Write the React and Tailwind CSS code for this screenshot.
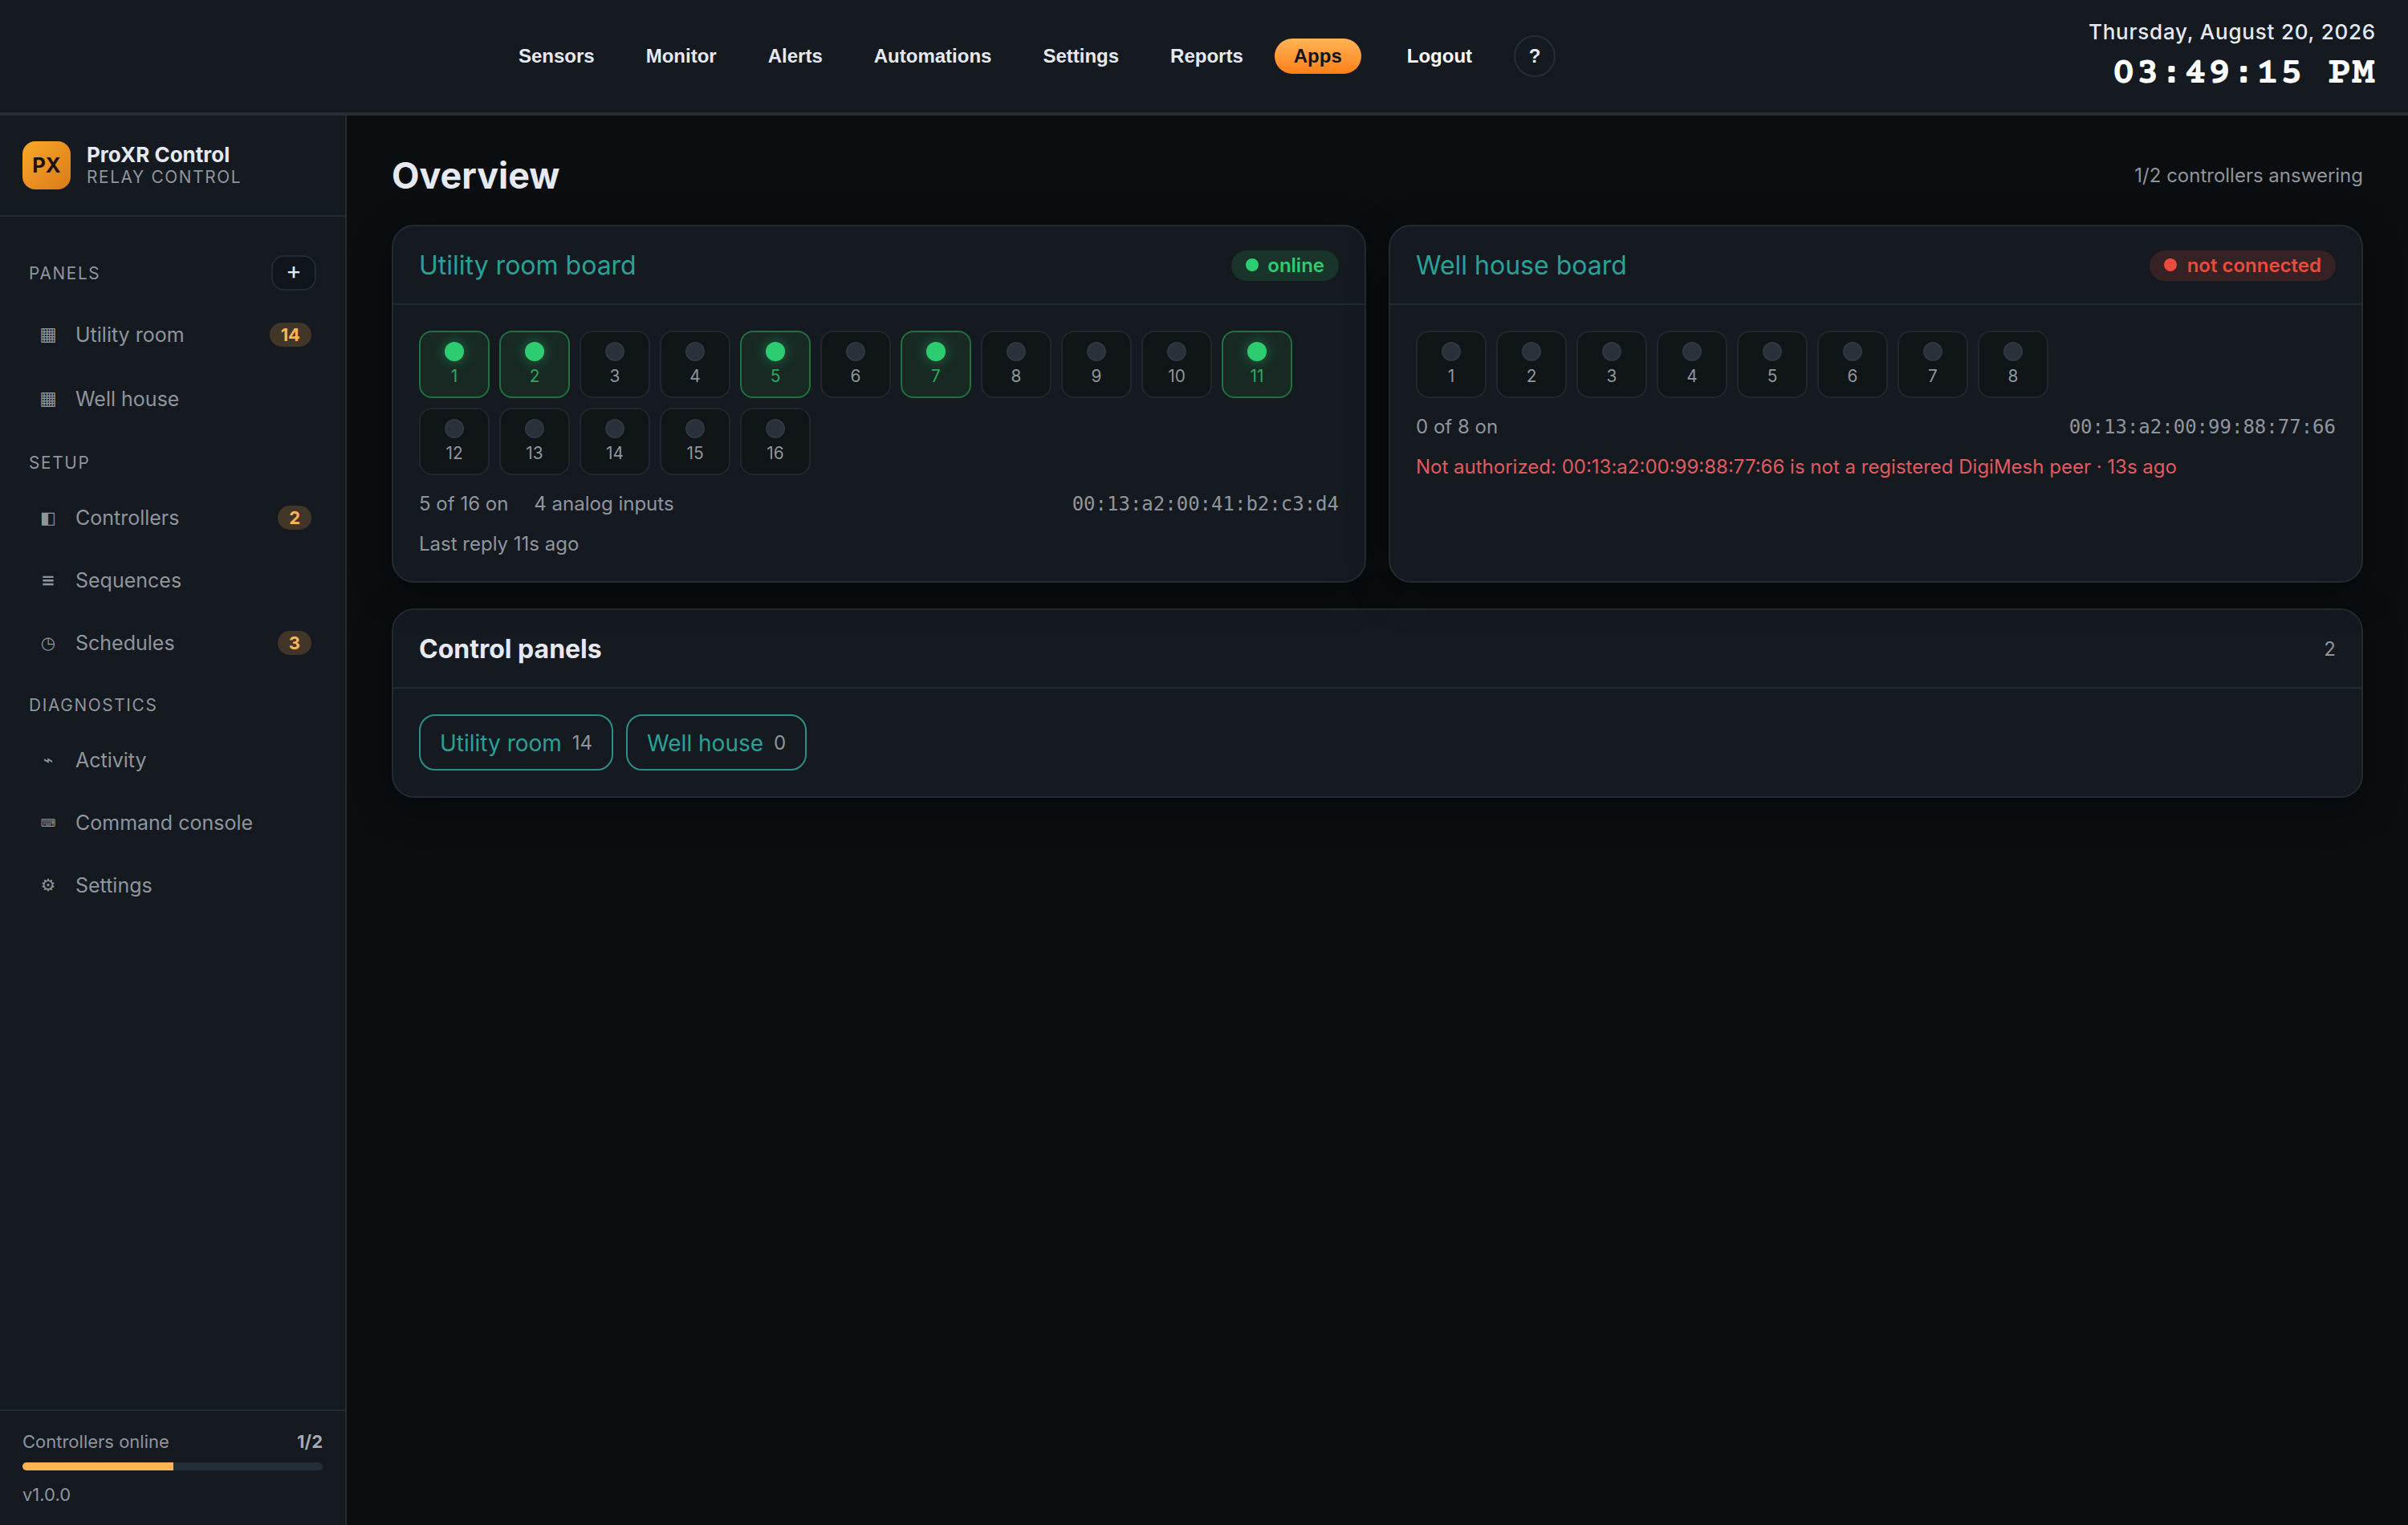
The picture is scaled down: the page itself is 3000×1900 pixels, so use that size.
import React from "react";

const NAV_LINKS = ["Sensors", "Monitor", "Alerts", "Automations", "Settings", "Reports"];

const PANELS = [
  { name: "Utility room", count: 14 },
  { name: "Well house", count: 0 },
];

const SETUP = [
  { icon: "◧", name: "Controllers", count: 2 },
  { icon: "≡", name: "Sequences" },
  { icon: "◷", name: "Schedules", count: 3 },
];

const DIAGNOSTICS = [
  { icon: "⌁", name: "Activity" },
  { icon: "⌨", name: "Command console", small: true },
  { icon: "⚙", name: "Settings" },
];

function Header() {
  return (
    <header className="flex h-36 shrink-0 items-start justify-between border-b-4 border-[#252e37] bg-[#151a21] pr-10 pl-[622px]">
      <nav className="flex h-[140px] items-center font-['Liberation_Sans',sans-serif] text-[24px] font-bold text-[#e6e9f2]">
        <div className="flex gap-4">
          {NAV_LINKS.map((link) => (
            <a key={link} className="flex h-11 items-center px-6">{link}</a>
          ))}
          <a className="-ml-px flex h-11 items-center rounded-full bg-linear-to-b from-[#ffb454] to-[#ff7f11] px-6 text-[#111418]">Apps</a>
        </div>
        <button className="ml-[33px] flex h-11 items-center px-6 text-white">Logout</button>
        <button className="ml-7 flex size-[52px] items-center justify-center rounded-full border-2 border-[#252e37]">?</button>
      </nav>
      <div className="flex flex-col items-end pt-6">
        <div className="text-[26px] leading-8 font-medium tracking-[0.78px] text-[#e6e9f2]">Thursday, August 20, 2026</div>
        <div className="mt-[11px] font-['Courier_Prime','Courier_10_Pitch','Nimbus_Mono_PS','FreeMono','Liberation_Mono',monospace] text-[48px] leading-[50px] font-bold tracking-[1.1px] whitespace-pre text-white">03:49:15 PM</div>
      </div>
    </header>
  );
}

function Badge({ children }) {
  return (
    <span className="flex h-[30px] items-center rounded-full bg-[#423628] px-3.5 text-[22px] font-bold text-[#ffb454]">{children}</span>
  );
}

function iconSize(big, small) {
  if (big) return "text-[23px] -mt-0.5";
  return small ? "text-[13px]" : "text-[21px] font-bold";
}

function NavItem({ icon, name, count, big, small }) {
  return (
    <a className={big ? "flex h-20 items-center pr-[42px] pl-11" : "flex h-[78px] items-center pr-[42px] pl-11"}>
      <span className={`flex w-8 justify-center font-['DejaVu_Sans',sans-serif] leading-none ${iconSize(big, small)}`}>{icon}</span>
      <span className="mt-0.5 ml-[18px] flex-1 text-[25px]">{name}</span>
      {count ? <Badge>{count}</Badge> : null}
    </a>
  );
}

function Sidebar() {
  return (
    <aside className="flex w-[432px] shrink-0 flex-col border-r-2 border-[#222b33] bg-[#151a21] text-[#8f959d]">
      {/* Brand */}
      <div className="flex h-[126px] items-center gap-5 border-b-2 border-[#222b33] pl-7">
        <div className="flex size-[60px] items-center justify-center rounded-[16px] bg-linear-135 from-[#f9a826] to-[#d97a1a] text-[25.6px] font-bold text-[#1a1206]">PX</div>
        <div>
          <div className="text-[26px] leading-[30px] font-bold text-[#e6e9f2]">ProXR Control</div>
          <div className="text-[20.8px] leading-[26px] tracking-[1.66px]">RELAY CONTROL</div>
        </div>
      </div>

      {/* Links */}
      <div className="flex-1 pt-12">
        <div className="mb-[15px] flex h-11 items-center justify-between pr-9 pl-9">
          <span className="mt-0.5 text-[20.8px] tracking-[1.66px]">PANELS</span>
          <button className="flex h-11 w-14 items-center justify-center rounded-[16px] border-2 border-[#222b33] bg-[#10141b] pb-1.5 text-[30px] text-[#e6e9f2]">+</button>
        </div>
        {PANELS.map((p) => (
          <NavItem key={p.name} icon="▦" name={p.name} count={p.count} big />
        ))}
        <div className="mt-[27px] mb-4 pl-9 text-[20.8px] leading-[26px] tracking-[1.66px]">SETUP</div>
        {SETUP.map((item) => (
          <NavItem key={item.name} {...item} />
        ))}
        <div className="mt-[26px] mb-4 pl-9 text-[20.8px] leading-[26px] tracking-[1.66px]">DIAGNOSTICS</div>
        {DIAGNOSTICS.map((item) => (
          <NavItem key={item.name} {...item} />
        ))}
      </div>

      {/* Footer */}
      <div className="h-[144px] border-t-2 border-[#222b33] px-7 pt-6 text-[22px]">
        <div className="flex justify-between leading-7">
          <span>Controllers online</span>
          <span className="font-bold text-[#a4a9b1]">1/2</span>
        </div>
        <div className="mt-3 h-2.5 overflow-hidden rounded-full bg-[#252e37]">
          <div className="h-full w-[188px] bg-[#ffb454]" />
        </div>
        <div className="mt-4 leading-7">v1.0.0</div>
      </div>
    </aside>
  );
}

function Relay({ number, on }) {
  return (
    <div className={on ? "flex h-[84px] w-[88px] flex-col items-center rounded-[16px] border-2 border-[#22703f] bg-[#182924] pt-3 text-[#29a95f]" : "flex h-[84px] w-[88px] flex-col items-center rounded-[16px] border-2 border-[#20272f] bg-[#101518] pt-3"}>
      <span className={on ? "size-6 rounded-full bg-[#2ecc71] shadow-[0_0_16px_rgba(46,204,113,0.45)]" : "size-6 rounded-full border-2 border-[#303842] bg-[#2a313b]"} />
      <span className="mt-[7px] text-[20.8px] leading-6">{number}</span>
    </div>
  );
}

function BoardCard({ title, status, online, total, active, inputs, mac, children }) {
  const relays = Array.from({ length: total }, (_, i) => i + 1);
  return (
    <section className="flex-1 rounded-[28px] border-2 border-[#222b33] bg-[#151a21] shadow-[0_12px_48px_rgba(0,0,0,0.35)]">
      <div className="flex h-[98px] items-center justify-between border-b-2 border-[#222b33] px-8">
        <h2 className="mt-0.5 text-[32px] text-[#2aa198]">{title}</h2>
        <span className={online ? "mt-0.5 flex h-[38px] items-center gap-[11px] rounded-full bg-[#19342a] px-[18px] text-[24px] font-semibold text-[#2ecc71]" : "mt-0.5 flex h-[38px] items-center gap-[13px] rounded-full bg-[#362124] px-[18px] text-[24px] font-semibold text-[#e74c3c]"}>
          <span className={online ? "-mt-0.5 size-4 rounded-full bg-[#2ecc71]" : "-mt-0.5 size-4 rounded-full bg-[#e74c3c]"} />
          {status}
        </span>
      </div>
      <div className="p-8 pb-7 text-[24px] text-[#8f959d]">
        <div className="flex flex-wrap gap-3">
          {relays.map((n) => (
            <Relay key={n} number={n} on={active.includes(n)} />
          ))}
        </div>
        <div className="mt-4 flex leading-10">
          <span>{active.length} of {total} on</span>
          {inputs && <span className="ml-8">{inputs}</span>}
          <span className="ml-auto font-['DejaVu_Sans_Mono',monospace] text-[24px]">{mac}</span>
        </div>
        {children}
      </div>
    </section>
  );
}

export default function App() {
  return (
    <div className="flex h-[1900px] flex-col bg-[#0a0e10] font-[Inter,sans-serif]">
      <Header />
      <div className="flex flex-1">
        <Sidebar />
        <main className="flex-1 px-14 pt-12">
          <div className="flex h-[88px] justify-between">
            <h1 className="text-[44.8px] leading-[54px] font-bold text-[#e6e9f2]">Overview</h1>
            <span className="text-[24px] leading-[54px] text-[#8f959d]">1/2 controllers answering</span>
          </div>

          {/* Boards */}
          <div className="flex h-[446px] gap-7">
            <BoardCard title="Utility room board" status="online" online total={16} active={[1, 2, 5, 7, 11]} inputs="4 analog inputs" mac="00:13:a2:00:41:b2:c3:d4">
              <div className="mt-2.5 leading-10">Last reply 11s ago</div>
            </BoardCard>
            <BoardCard title="Well house board" status="not connected" total={8} active={[]} mac="00:13:a2:00:99:88:77:66">
              <div className="mt-2.5 leading-10 text-[#e05a5e]">Not authorized: 00:13:a2:00:99:88:77:66 is not a registered DigiMesh peer · 13s ago</div>
            </BoardCard>
          </div>

          {/* Control panels */}
          <section className="mt-8 rounded-[28px] border-2 border-[#222b33] bg-[#151a21] shadow-[0_12px_48px_rgba(0,0,0,0.35)]">
            <div className="flex h-[98px] items-center justify-between border-b-2 border-[#222b33] px-8">
              <h2 className="mt-0.5 text-[32px] font-bold text-[#e6e9f2]">Control panels</h2>
              <span className="mt-0.5 text-[24px] text-[#8f959d]">2</span>
            </div>
            <div className="flex gap-4 p-8">
              {PANELS.map((p) => (
                <button key={p.name} className="flex h-[70px] items-center gap-[13px] rounded-[20px] border-2 border-[#2b8f88] px-6 pt-0.5 text-[28px] text-[#2aa198]">
                  {p.name}
                  <span className="text-[24px] text-[#8f959d]">{p.count}</span>
                </button>
              ))}
            </div>
          </section>
        </main>
      </div>
    </div>
  );
}
